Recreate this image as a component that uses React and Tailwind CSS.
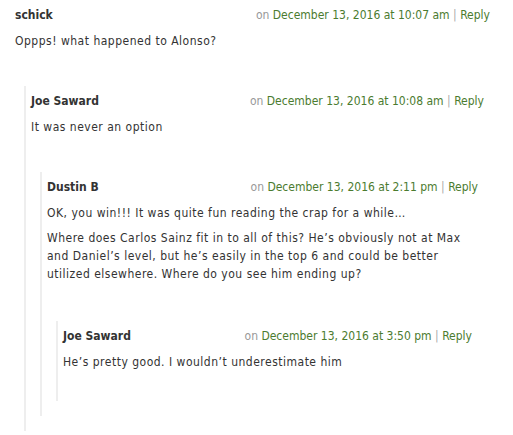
import React from "react";

const data = {
  name: "schick",
  date: "December 13, 2016 at 10:07 am",
  body: ["Oppps! what happened to Alonso?"],
  gap: "pt-[21px]",
  children: [
    {
      name: "Joe Saward",
      date: "December 13, 2016 at 10:08 am",
      body: ["It was never an option"],
      gap: "pt-[21px]",
      children: [
        {
          name: "Dustin B",
          date: "December 13, 2016 at 2:11 pm",
          body: [
            "OK, you win!!! It was quite fun reading the crap for a while…",
            "Where does Carlos Sainz fit in to all of this? He’s obviously not at Max and Daniel’s level, but he’s easily in the top 6 and could be better utilized elsewhere. Where do you see him ending up?",
          ],
          gap: "pt-[23px]",
          children: [
            {
              name: "Joe Saward",
              date: "December 13, 2016 at 3:50 pm",
              body: ["He’s pretty good. I wouldn’t underestimate him"],
              children: [],
            },
          ],
        },
      ],
    },
  ],
};

function Comment({ c }) {
  return (
    <div className="flex flex-col pt-[6px] pb-[15px]">
      <div className="flex h-[18px] items-center justify-between leading-[18px]">
        <span className="font-bold text-[#333]">{c.name}</span>
        <span className="whitespace-nowrap">
          <span className="text-[#999]">on </span>
          <span className="text-[#4b7b2f]">{c.date}</span>
          <span className="text-[#aaa]"> | </span>
          <span className="text-[#4b7b2f]">Reply</span>
        </span>
      </div>
      <div className="mt-[8px] flex flex-col gap-[7px] pb-[15px] tracking-[0.5px] text-[#333]">
        {c.body.map((p, i) => (
          <p key={i} className="leading-[18px]">
            {p}
          </p>
        ))}
      </div>
      {c.children.length > 0 && (
        <div className={"flex flex-col " + c.gap}>
          {c.children.map((ch, i) => (
            <div
              key={i}
              className="ml-[9px] mr-[6px] border-l-2 border-[#eeeeee] pl-[5px]"
            >
              <Comment c={ch} />
            </div>
          ))}
        </div>
      )}
    </div>
  );
}

export default function App() {
  return (
    <div
      className="min-h-[435px] w-[513px] bg-white pl-[15px] pr-[23px] text-[12px]"
      style={{ fontFamily: '"DejaVu Sans Condensed", "DejaVu Sans", sans-serif' }}
    >
      <Comment c={data} />
    </div>
  );
}
